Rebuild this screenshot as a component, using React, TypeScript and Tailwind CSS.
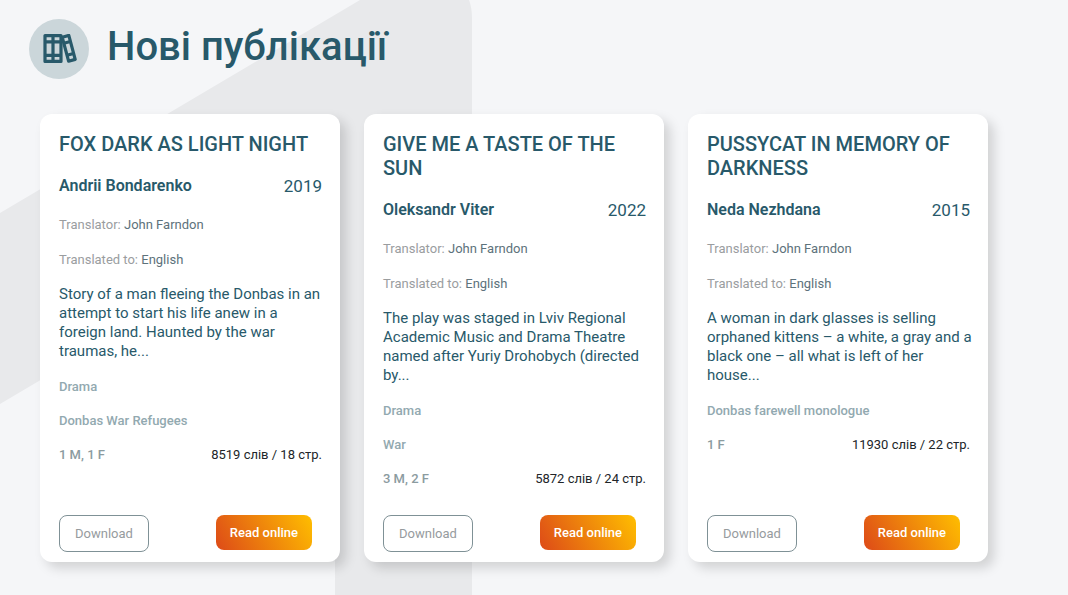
import { useId } from "react";

type Publication = {
  title: string;
  author: string;
  year: number;
  translator: string;
  language: string;
  summary: string;
  tags: string[];
  roles: string[];
  length: string;
};

const publications: Publication[] = [
  {
    title: "Fox dark as light night",
    author: "Andrii Bondarenko",
    year: 2019,
    translator: "John Farndon",
    language: "English",
    summary:
      "Story of a man fleeing the Donbas in an attempt to start his life anew in a foreign land. Haunted by the war traumas, he...",
    tags: ["Drama", "Donbas War Refugees"],
    roles: ["1 M", "1 F"],
    length: "8519 слів / 18 стр.",
  },
  {
    title: "Give me a taste of the sun",
    author: "Oleksandr Viter",
    year: 2022,
    translator: "John Farndon",
    language: "English",
    summary:
      "The play was staged in Lviv Regional Academic Music and Drama Theatre named after Yuriy Drohobych (directed by...",
    tags: ["Drama", "War"],
    roles: ["3 M", "2 F"],
    length: "5872 слів / 24 стр.",
  },
  {
    title: "Pussycat in memory of darkness",
    author: "Neda Nezhdana",
    year: 2015,
    translator: "John Farndon",
    language: "English",
    summary:
      "A woman in dark glasses is selling orphaned kittens – a white, a gray and a black one – all what is left of her house...",
    tags: ["Donbas farewell monologue"],
    roles: ["1 F"],
    length: "11930 слів / 22 стр.",
  },
];

function BooksIcon() {
  return (
    <svg width="36" height="30" viewBox="0 0 36 30" fill="none" stroke="#28596a" strokeWidth="3.2" strokeLinejoin="round" aria-hidden="true">
      <path d="M4 1.6h8v25.8H4zM12 1.6h8v25.8h-8z" />
      <path d="M4 7.8h16M4 21.4h16" />
      <path d="M21.2 3.2l6.6-1.8 6.4 24-6.6 1.8z" />
      <path d="M22.8 9.3l6.6-1.8M26 21.3l6.6-1.8" />
    </svg>
  );
}

// Large grey figure behind the cards
function Backdrop() {
  return (
    <svg className="absolute left-0 top-0 -z-10" width="472" height="900" viewBox="0 0 472 900" fill="#e8e9eb" aria-hidden="true">
      <path d="M0 213L360 0H469Q472 8 472 18V900H335V206L0 404z" />
    </svg>
  );
}

function PublicationCard({ item }: { item: Publication }) {
  const titleId = useId();

  return (
    <article
      aria-labelledby={titleId}
      className="flex flex-col rounded-xl bg-white pt-[18px] pr-[18px] pb-[10px] pl-[19px] shadow-[6px_6px_12px_rgba(0,0,0,0.15)]"
    >
      <h2 id={titleId} className="text-xl leading-6 font-medium uppercase">{item.title}</h2>
      <div className="mt-[18px] flex items-center justify-between">
        <a href="#author" className="text-base leading-6 font-semibold">{item.author}</a>
        <span className="text-[17px] leading-6">{item.year}</span>
      </div>
      <p className="mt-[17px] text-[13px] leading-5 text-[#9a9d9f]">
        Translator: <span className="text-[#5d727b]">{item.translator}</span>
      </p>
      <p className="mt-[15px] text-[13px] leading-5 text-[#9a9d9f]">
        Translated to: <span className="text-[#5d727b]">{item.language}</span>
      </p>
      <p className="-mr-1 mt-[15px] mb-[2px] text-[15px] leading-[19px]">{item.summary}</p>
      {item.tags.map(tag => (
        <a key={tag} href="#tag" className="mt-[14px] text-[13px] leading-5 font-medium text-[#92a9b0]">{tag}</a>
      ))}
      <div className="mt-[14px] flex justify-between text-[13px] leading-5">
        <span className="font-medium text-[#8b9b9f]">{item.roles.join(", ")}</span>
        <span className="text-[#212529]">{item.length}</span>
      </div>
      <div className="mt-auto flex items-start justify-between pr-[10px]">
        <button type="button" className="h-[37px] rounded-lg border border-[#7f9196] px-[15px] text-[13px] text-[#969b9e]">
          Download
        </button>
        <button type="button" className="h-[35px] rounded-lg bg-linear-[60deg,#dd4a18,#ffbe00] px-[14px] text-[13px] font-medium text-white">
          Read online
        </button>
      </div>
    </article>
  );
}

export default function App() {
  return (
    <main className="relative isolate min-h-screen overflow-hidden bg-[#f5f6f8] pb-8 font-[Roboto,sans-serif] text-[#28596a]">
      <Backdrop />
      <header className="flex items-start gap-[18px] pt-[19px] pl-[29px]">
        <div className="flex size-[60px] items-center justify-center rounded-full bg-[#cbd6da]">
          <BooksIcon />
        </div>
        <h1 className="text-[40px] leading-[56px] font-medium">Нові публікації</h1>
      </header>
      <section className="mt-[35px] mr-20 ml-10 grid min-h-[448px] grid-cols-3 gap-6">
        {publications.map(item => (
          <PublicationCard key={item.title} item={item} />
        ))}
      </section>
    </main>
  );
}
